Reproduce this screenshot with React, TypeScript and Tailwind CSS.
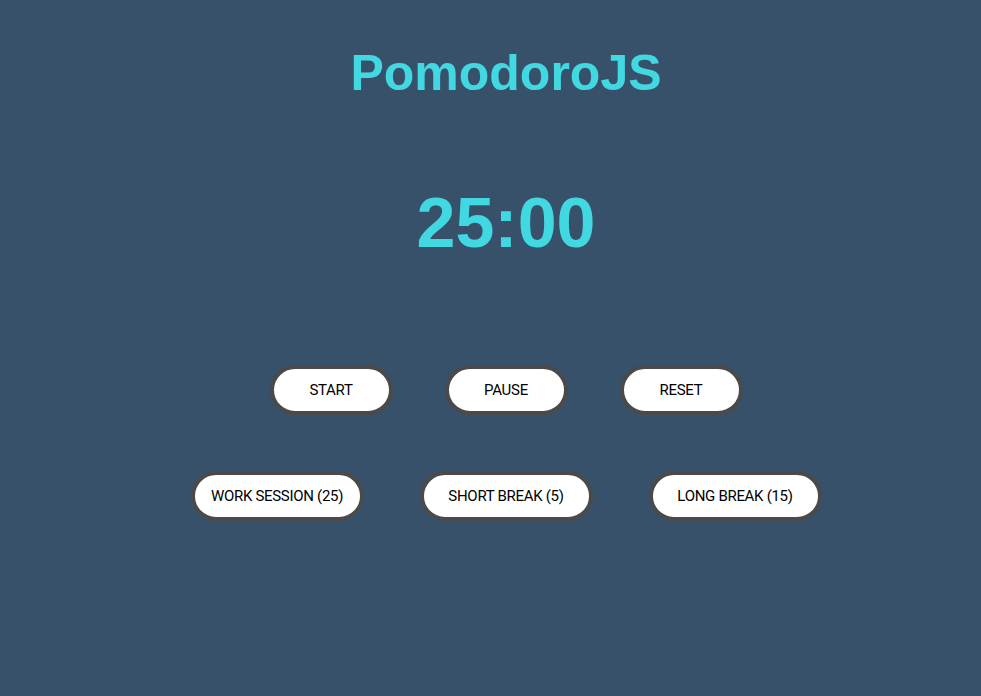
const controls = ["START", "PAUSE", "RESET"];
const sessions = ["WORK SESSION (25)", "SHORT BREAK (5)", "LONG BREAK (15)"];

const App = () => {
  return (
    <div className="min-h-[696px] w-full bg-[#38516b] pl-[31px] pt-[48px] flex flex-col items-center font-['Liberation_Sans',Arial,sans-serif]">
      <h1 className="text-[50px] leading-none font-bold text-[#41d8e2]">PomodoroJS</h1>

      <div className="mt-[90px] text-[70px] leading-none font-bold text-[#41d8e2]">25:00</div>

      <div className="mt-[107px] flex gap-[52px]">
        {controls.map((label) => (
          <button
            key={label}
            className="w-[123px] h-[50px] rounded-full border-[4px] border-[#4a4a4a] bg-white text-black text-[15px] font-normal tracking-[-0.3px] font-['Roboto',sans-serif]"
          >
            {label}
          </button>
        ))}
      </div>

      <div className="mt-[56px] flex gap-[56px]">
        {sessions.map((label) => (
          <button
            key={label}
            className="w-[173px] h-[50px] rounded-full border-[4px] border-[#4a4a4a] bg-white text-black text-[15px] font-normal tracking-[-0.3px] font-['Roboto',sans-serif]"
          >
            {label}
          </button>
        ))}
      </div>
    </div>
  );
};

export default App;
